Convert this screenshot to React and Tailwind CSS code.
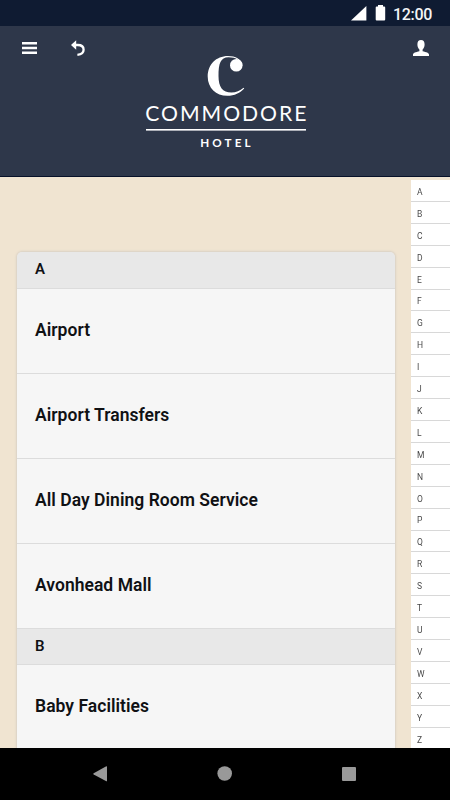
const LETTERS = 'ABCDEFGHIJKLMNOPQRSTUVWXYZ'.split('');

function StatusBar() {
  return (
    <div className="flex h-[26px] shrink-0 items-center justify-end bg-[#0f1b32] pr-[18px] text-[#f4f5f7]">
      <svg className="mr-2 h-4 w-4" viewBox="0 0 16 16" fill="white">
        <path d="M15.4 1v14.5H0z" />
      </svg>
      <svg className="mr-[7px] h-4 w-[11px]" viewBox="0 0 11 16" fill="white">
        <path d="M3 0h5v1.5h1.2q1 0 1 1v12.1q0 1-1 1H1.7q-1 0-1-1V2.5q0-1 1-1H3z" />
      </svg>
      <span className="w-[39px] whitespace-nowrap pt-[3px] text-[16px] font-medium leading-[24px] tracking-[-0.3px]">12:00</span>
    </div>
  );
}

function Logo() {
  return (
    <svg className="h-[100px] w-[164px]" viewBox="144 52 164 100" fill="white">
      <path d="M242.3 64.8C241.2 59.3 235.5 56 228 56C216 56 207.7 64.7 207.7 76.5C207.7 88 216 95.8 227.3 95.8C234.4 95.8 240.3 93 244.2 88.5L243.6 87.8C240 91 236 92.5 231.4 92.5C222.5 92.5 218.5 87 218.5 76C218.5 63.5 220.5 57.2 228.5 57.2C232.5 57.2 235.5 57.9 237.5 59.5Z" />
      <circle cx="236.3" cy="65.3" r="6.3" />
      <text x="145.3" y="121" fontFamily="Lato, sans-serif" fontSize="20.8" textLength="163" lengthAdjust="spacingAndGlyphs" letterSpacing="1.9">COMMODORE</text>
      <rect x="146" y="129" width="160" height="1.6" />
      <text x="200.2" y="146.6" fontFamily="Lato, sans-serif" fontWeight="700" fontSize="11.2" textLength="53.5" lengthAdjust="spacingAndGlyphs" letterSpacing="3">HOTEL</text>
    </svg>
  );
}

function Header() {
  return (
    <header className="flex h-[151px] shrink-0 items-start border-b border-[#071129] bg-[#2e374a]">
      <div className="flex w-[144px] pl-[22px] pt-[14px]">
        <svg className="h-4 w-[15px]" viewBox="0 0 15 16" fill="white">
          <path d="M0 2h15v2.5H0zM0 6.8h15v2.4H0zM0 11.4h15v2.5H0z" />
        </svg>
        <svg className="ml-[34px] h-4 w-[15px]" viewBox="0 0 15 16" fill="none">
          <path d="M0 5L5.2.3v9.4z" fill="white" />
          <path d="M4 5h2.8c3.9 0 5.8 2 5.8 4.8 0 2.7-2.1 4.6-6.2 5" stroke="white" strokeWidth="2.3" />
        </svg>
      </div>
      <div className="pt-[26px]"><Logo /></div>
      <div className="flex w-[142px] justify-end pr-[21px] pt-[14px]">
        <svg className="h-4 w-4" viewBox="0 0 16 16" fill="white">
          <path d="M8 0C5.7 0 4.4 1.6 4.4 4.2c0 2.4.7 4.2 2 5.2v1.8C2.7 12.1 0 12.6 0 14.6V16h16v-1.4c0-2-2.7-2.5-6.4-3.4V9.4c1.3-1 2-2.8 2-5.2C11.6 1.6 10.3 0 8 0z" />
        </svg>
      </div>
    </header>
  );
}

function Section({ title, children }) {
  return (
    <section className="group">
      <h2 className="h-[36px] border-b border-[#dcdcdc] bg-[#e8e8e8] pl-[18px] text-[15px] font-semibold leading-[34px] group-first:h-[37px] group-first:leading-[35px]">{title}</h2>
      {children}
    </section>
  );
}

function Row({ children }) {
  return (
    <div className="flex h-[85px] items-center border-b border-[#dcdcdc] bg-[#f6f6f6] pb-px pl-[18px] text-[17.5px] font-semibold tracking-[0.03px]">
      {children}
    </div>
  );
}

export default function App() {
  return (
    <div className="flex h-[800px] w-[450px] flex-col overflow-hidden bg-[#f0e4d1] text-[#101114] [font-family:Roboto,sans-serif]">
      <StatusBar />
      <Header />
      <main className="flex min-h-0 flex-1 justify-between overflow-hidden">
        <div className="ml-[17px] mt-[75px] w-[378px] self-start overflow-hidden rounded-t-[5px] shadow-[0_0_2px_1px_#d9d1c5]">
          <Section title="A">
            <Row>Airport</Row>
            <Row>Airport Transfers</Row>
            <Row>All Day Dining Room Service</Row>
            <Row>Avonhead Mall</Row>
          </Section>
          <Section title="B">
            <Row>Baby Facilities</Row>
          </Section>
        </div>
        <nav className="mt-[3px] w-[39px] shrink-0">
          {LETTERS.map((letter) => (
            <div key={letter} className="flex h-[21.92px] items-center border-b border-[#d8d8d8] bg-white pl-[6px] pt-[3.6px] text-[8.5px] text-[#333]">
              <span className="opacity-90 will-change-[opacity]">{letter}</span>
            </div>
          ))}
        </nav>
      </main>
      <footer className="flex h-[52px] shrink-0 items-center bg-black">
        <svg className="ml-[93px] h-4 w-[14px]" viewBox="0 0 14 16" fill="#999">
          <path d="M.7 7.3L13.3.2q.7-.2.7.5v14q0 .7-.7.5L.7 8.5q-.8-.5 0-1.2z" />
        </svg>
        <svg className="ml-[110px] h-4 w-4" viewBox="0 0 16 16" fill="#999">
          <circle cx="7.7" cy="7.5" r="7.3" />
        </svg>
        <div className="ml-[109px] h-[14px] w-[14px] rounded-[1px] bg-[#999]" />
      </footer>
    </div>
  );
}
